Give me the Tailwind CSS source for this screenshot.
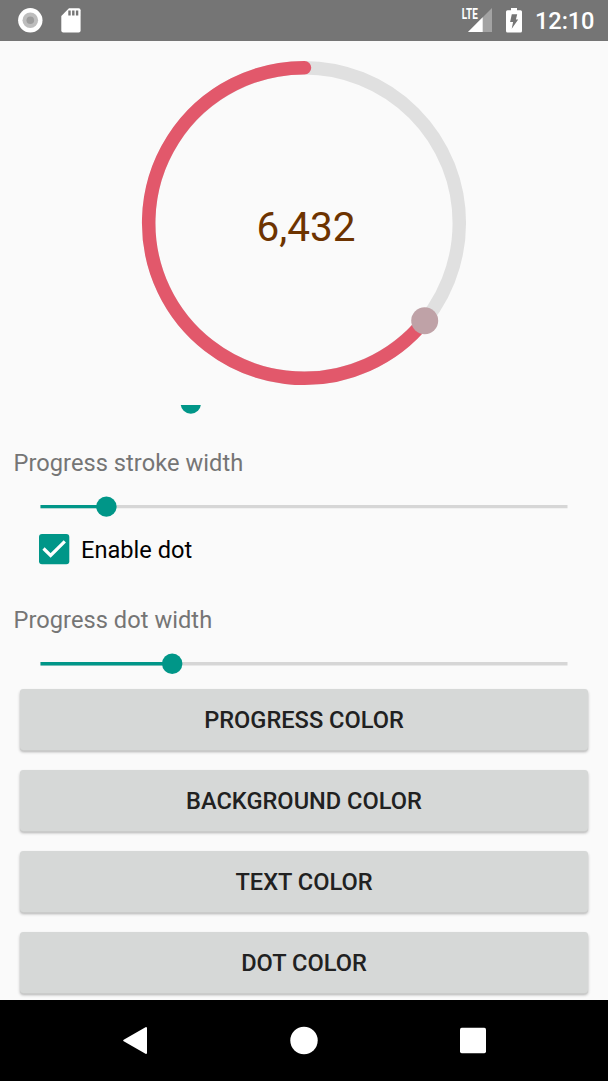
<!DOCTYPE html>
<html lang="en">
<head>
<meta charset="utf-8">
<title>Circular progress</title>
<script src="https://cdn.jsdelivr.net/npm/@tailwindcss/browser@4"></script>
</head>
<body class="bg-[#fafafa]">
<div class="flex h-[1081px] w-[608px] flex-col overflow-hidden bg-[#fafafa] font-['Roboto',sans-serif]">
  <!-- Status bar -->
  <header class="flex h-[40.5px] shrink-0 bg-[#757575]">
    <svg class="h-[40.5px] w-[608px]" viewBox="0 0 608 40.5">
      <circle cx="30.3" cy="20.3" r="12.2" fill="#fff"/>
      <circle cx="30.3" cy="20.3" r="7.8" fill="#bdbdbd"/>
      <circle cx="30.3" cy="20.3" r="3.8" fill="#9c9c9c"/>
      <path d="M69 8.2h9.6a2 2 0 0 1 2 2v20.400a2 2 0 0 1-2 2H63.300a2 2 0 0 1-2-2V16z" fill="#fff"/>
      <path d="M68.300 10.400h2.400v5.200h-2.400zM72.100 10.400h2.400v5.200h-2.400zM75.900 10.400h2.400v5.200h-2.400z" fill="#757575"/>
      <path d="M492 8v24h-24z" fill="#a3a3a3"/>
      <path d="M482.700 17.300V32H468z" fill="#fff"/>
      <path d="M460 6h19v14H460z" fill="#757575"/>
      <text transform="translate(461.800 18.800) scale(.75 1)" font-size="15" font-weight="700" fill="#fff" textLength="21.300" lengthAdjust="spacingAndGlyphs">LTE</text>
      <path d="M511 8h6v2.300h3.500a1.500 1.500 0 0 1 1.500 1.500V31a1.500 1.500 0 0 1-1.500 1.500h-13A1.500 1.500 0 0 1 506 31V11.800a1.500 1.500 0 0 1 1.500-1.500h3.500z" fill="#fff"/>
      <path d="M511.800 14.300h5.400l-1.300 5.200h2.300l-6.500 9.300 1.400-6.800h-3z" fill="#757575"/>
      <text x="535" y="29" font-size="23.625" font-weight="500" fill="#fff" textLength="59.500" lengthAdjust="spacing">12:10</text>
    </svg>
  </header>

  <!-- Progress ring -->
  <section class="grid h-[364.500px] shrink-0 place-items-center">
    <svg class="col-start-1 row-start-1 h-[364px] w-[364px]" viewBox="122 41 364 364">
      <circle cx="304" cy="223" r="155.300" fill="none" stroke="#e0e0e0" stroke-width="13.500"/>
      <path d="M304.500 67.700A155.300 155.300 0 1 0 424.700 320.700" fill="none" stroke="#e2586b" stroke-width="13.500" stroke-linecap="round"/>
      <circle cx="424.700" cy="320.700" r="13.500" fill="#bfa2a7"/>
      <text x="306" y="241" text-anchor="middle" font-size="40.500" fill="#6d3300">6,432</text>
    </svg>
  </section>

  <!-- Scrolling settings -->
  <main class="flex min-h-0 flex-1 flex-col overflow-hidden">
    <svg class="h-[42px] w-[608px] shrink-0" viewBox="0 405 608 42">
      <circle cx="190.800" cy="403.700" r="10.100" fill="#009688"/>
    </svg>
    <p class="h-[33px] shrink-0 pl-[13.500px] text-[23.625px] leading-[33px] tracking-[0.05px] text-[#757575]">Progress stroke width</p>
    <svg class="h-[50px] w-[608px] shrink-0" viewBox="0 480 608 50">
      <path d="M40.500 506.600h527" stroke="#d6d6d6" stroke-width="3.400"/>
      <path d="M40.500 506.600h66" stroke="#009688" stroke-width="3.400"/>
      <circle cx="106.400" cy="506.600" r="10.200" fill="#009688"/>
    </svg>
    <div class="flex h-[40px] shrink-0 items-center pl-[39px]">
      <svg class="mb-[2px] h-[31px] w-[31px]" viewBox="0 0 31 31">
        <rect x="0" y="0" width="30.300" height="30.300" rx="3" fill="#009688"/>
        <path d="M4.500 14.500 11.600 21.500 25.800 7.300" fill="none" stroke="#fff" stroke-width="3.200"/>
      </svg>
      <span class="pl-[11px] text-[23.625px] leading-[40px] text-black">Enable dot</span>
    </div>
    <p class="mt-[34px] h-[33px] shrink-0 pl-[13.500px] text-[23.625px] leading-[33px] tracking-[0.05px] text-[#757575]">Progress dot width</p>
    <svg class="h-[52px] w-[608px] shrink-0" viewBox="0 637 608 52">
      <path d="M40.500 663.700h527" stroke="#d6d6d6" stroke-width="3.400"/>
      <path d="M40.500 663.700h131" stroke="#009688" stroke-width="3.400"/>
      <circle cx="172.200" cy="663.700" r="10.200" fill="#009688"/>
    </svg>
    <div class="flex shrink-0 flex-col gap-[20px] px-5 text-[23.625px] font-medium text-[#212121]">
      <button class="h-[61px] rounded-[3.400px] bg-[#d6d8d7] pt-[3px] shadow-[0_1px_0_#cacbca,0_2px_3px_rgba(0,0,0,0.300)]">PROGRESS COLOR</button>
      <button class="h-[61px] rounded-[3.400px] bg-[#d6d8d7] pt-[3px] shadow-[0_1px_0_#cacbca,0_2px_3px_rgba(0,0,0,0.300)]">BACKGROUND COLOR</button>
      <button class="h-[61px] rounded-[3.400px] bg-[#d6d8d7] pt-[3px] shadow-[0_1px_0_#cacbca,0_2px_3px_rgba(0,0,0,0.300)]">TEXT COLOR</button>
      <button class="h-[61px] rounded-[3.400px] bg-[#d6d8d7] pt-[3px] shadow-[0_1px_0_#cacbca,0_2px_3px_rgba(0,0,0,0.300)]">DOT COLOR</button>
    </div>
  </main>

  <!-- Navigation bar -->
  <nav class="h-[81px] shrink-0 bg-black">
    <svg class="h-[81px] w-[608px]" viewBox="0 1000 608 81" fill="#fff">
      <path d="M124.200 1040.500 146 1028v25z" stroke="#fff" stroke-width="2" stroke-linejoin="round"/>
      <circle cx="304" cy="1040.500" r="13.700"/>
      <rect x="460" y="1027.700" width="26" height="25.600" rx="1.700"/>
    </svg>
  </nav>
</div>
</body>
</html>
